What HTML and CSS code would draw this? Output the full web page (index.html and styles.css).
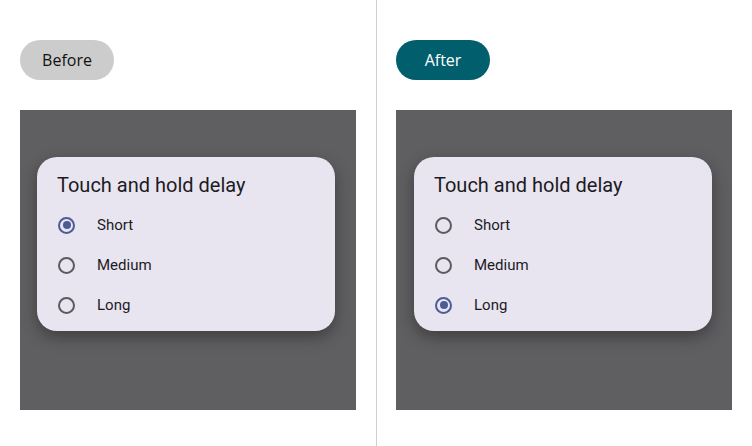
FILE: index.html
```html
<!DOCTYPE html>
<html>
<head>
<meta charset="utf-8">
<link rel="stylesheet" href="styles.css">
</head>
<body>
<div class="page">
  <section class="col">
    <div class="pill pill-before">Before</div>
    <div class="stage">
      <div class="card">
        <div class="title">Touch and hold delay</div>
        <div class="option"><span class="radio checked"></span><span class="label">Short</span></div>
        <div class="option"><span class="radio"></span><span class="label">Medium</span></div>
        <div class="option"><span class="radio"></span><span class="label">Long</span></div>
      </div>
    </div>
  </section>
  <section class="col col-right">
    <div class="pill pill-after">After</div>
    <div class="stage">
      <div class="card">
        <div class="title">Touch and hold delay</div>
        <div class="option"><span class="radio"></span><span class="label">Short</span></div>
        <div class="option"><span class="radio"></span><span class="label">Medium</span></div>
        <div class="option"><span class="radio checked"></span><span class="label">Long</span></div>
      </div>
    </div>
  </section>
</div>
</body>
</html>
```
FILE: styles.css
```css
html, body {
  margin: 0;
  padding: 0;
  background: #ffffff;
}
.page {
  display: flex;
  width: 752px;
  height: 446px;
}
.col {
  width: 376px;
  box-sizing: border-box;
  padding: 40px 0 0 20px;
}
.col-right {
  border-left: 1px solid #cfcfcf;
  padding-left: 19px;
}
.pill {
  width: 94px;
  height: 40px;
  border-radius: 20px;
  display: flex;
  align-items: center;
  justify-content: center;
  font-family: "Open Sans", sans-serif;
  font-size: 16px;
  margin-bottom: 30px;
}
.pill-before {
  background: #cccccc;
  color: #111111;
}
.pill-after {
  background: #005e6d;
  color: #ffffff;
}
.stage {
  width: 336px;
  height: 300px;
  background: #5f5f61;
  box-sizing: border-box;
  padding: 47px 0 0 17px;
}
.col-right .stage {
  padding-left: 18px;
}
.card {
  width: 298px;
  height: 174px;
  box-sizing: border-box;
  background: #e8e5f0;
  border-radius: 20px;
  padding: 16px 0 0 20px;
  box-shadow: 0 6px 16px rgba(0, 0, 0, 0.35);
}
.title {
  font-family: "Roboto", sans-serif;
  font-size: 20px;
  line-height: 24px;
  color: #1c1b1f;
  margin-bottom: 8px;
}
.option {
  display: flex;
  align-items: center;
  height: 40px;
}
.radio {
  width: 13px;
  height: 13px;
  border: 2px solid #5b5b5f;
  border-radius: 50%;
  margin-left: 1px;
  margin-right: 22px;
  box-sizing: content-box;
  display: flex;
  align-items: center;
  justify-content: center;
}
.radio.checked {
  border-color: #4d5b97;
}
.radio.checked::after {
  content: "";
  width: 8px;
  height: 8px;
  border-radius: 50%;
  background: #4d5b97;
}
.label {
  font-family: "Roboto", sans-serif;
  font-size: 15px;
  color: #1c1b1f;
}
```
